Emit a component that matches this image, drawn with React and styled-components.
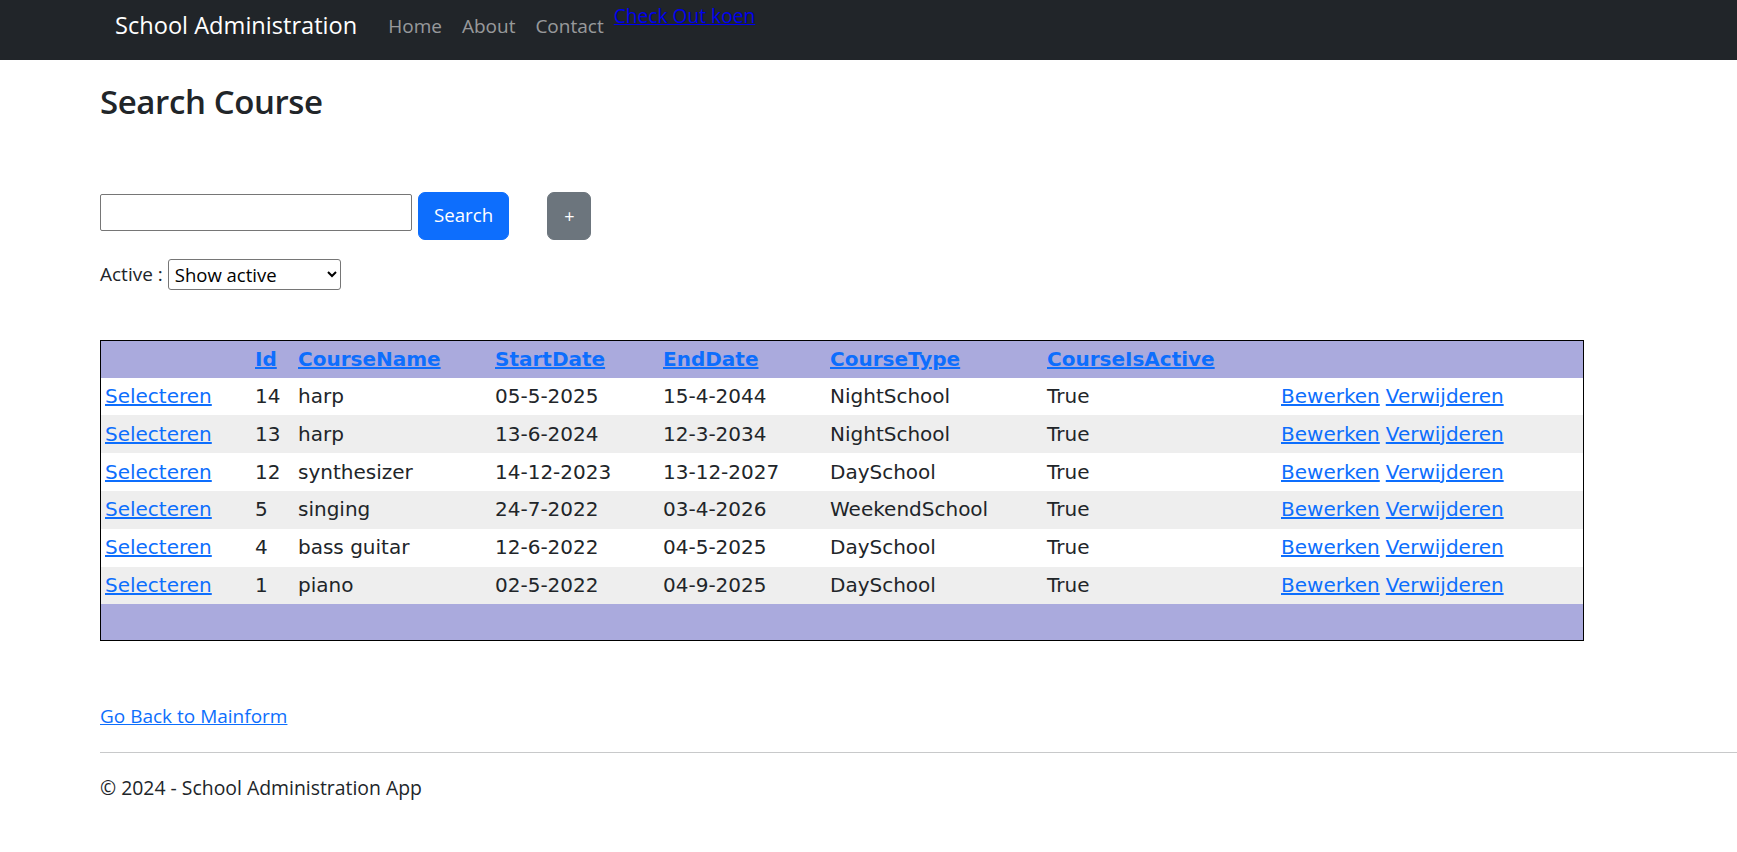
import React from "react";
import styled, { createGlobalStyle } from "styled-components";

const GlobalStyle = createGlobalStyle`
  html, body { margin: 0; padding: 0; background: #fff; }
  body {
    font-family: "Open Sans", "Liberation Sans", sans-serif;
    color: #212529;
    font-size: 19px;
  }
  * { box-sizing: border-box; }
`;

const Navbar = styled.nav`
  height: 60px;
  background: #212529;
  display: flex;
  align-items: flex-start;
  padding-left: 115px;
`;

const Brand = styled.a`
  color: #fff;
  font-size: 23.6px;
  line-height: normal;
  margin-top: 9px;
  margin-right: 21px;
  text-decoration: none;
  white-space: nowrap;
`;

const NavList = styled.ul`
  list-style: none;
  margin: 13px 0 0;
  padding: 0;
  display: flex;
`;

const NavLink = styled.a`
  display: block;
  padding: 0 10px;
  font-size: 19px;
  line-height: normal;
  color: rgba(255, 255, 255, 0.55);
  text-decoration: none;
`;

const RawLink = styled.a`
  margin-top: 2px;
  font-size: 19.2px;
  line-height: normal;
  color: #0000ee;
  text-decoration: underline;
  white-space: nowrap;
`;

const Main = styled.main`
  padding-left: 100px;
`;

const Heading = styled.h3`
  margin: 22px 0 0;
  font-size: 33px;
  font-weight: 600;
  letter-spacing: -0.4px;
  line-height: 39.6px;
  color: #212529;
`;

const SearchRow = styled.div`
  display: flex;
  align-items: flex-start;
  margin-top: 70px;
  height: 48px;
`;

const TextInput = styled.input`
  width: 312px;
  height: 37.5px;
  margin-top: 2px;
  border: 1px solid #767676;
  border-radius: 2px;
  font-size: 18px;
  font-family: "Open Sans", sans-serif;
  padding: 0 4px;
`;

const Button = styled.button`
  height: 48px;
  margin-left: ${(p) => p.$gap}px;
  padding: 0 ${(p) => p.$pad}px;
  border: 1px solid ${(p) => p.$bg};
  background: ${(p) => p.$bg};
  color: #fff;
  border-radius: 7px;
  font-family: "Open Sans", sans-serif;
  font-size: ${(p) => p.$fs}px;
  line-height: 1;
  cursor: pointer;
`;

const FilterRow = styled.div`
  display: flex;
  align-items: center;
  margin-top: 19px;
  height: 31px;
`;

const Label = styled.span`
  font-size: 19px;
  margin-right: 5px;
  white-space: pre;
`;

const Select = styled.select`
  width: 173px;
  height: 31px;
  border: 1px solid #767676;
  border-radius: 3px;
  background: #fff;
  font-family: "Open Sans", sans-serif;
  font-size: 18.5px;
  color: #000;
  padding: 0 2px;
`;

const Table = styled.table`
  margin-top: 50px;
  width: 1484px;
  border: 1px solid #000;
  border-spacing: 0;
  table-layout: fixed;
  font-family: "DejaVu Sans", Verdana, sans-serif;
  font-size: 20px;
`;

const HeadRow = styled.tr`
  background: #aaaadd;
`;

const Row = styled.tr`
  background: ${(p) => (p.$alt ? "#eeeeee" : "#ffffff")};
`;

const Th = styled.th`
  text-align: left;
  font-weight: bold;
  padding: 1px 4px 0;
  height: 37px;
  line-height: 23px;
`;

const Td = styled.td`
  padding: 0 4px;
  height: 37.8px;
  line-height: 23px;
  color: #212529;
  white-space: nowrap;
`;

const FootCell = styled.td`
  height: 35.5px;
  background: #aaaadd;
`;

const Link = styled.a`
  color: #0d6efd;
  text-decoration: underline;
`;

const ActionLink = styled(Link)`
  margin-right: 6px;
`;

const BackLink = styled.a`
  display: inline-block;
  margin-top: 61px;
  font-size: 19px;
  line-height: 28.5px;
  color: #0d6efd;
  text-decoration: underline;
`;

const Footer = styled.footer`
  margin-left: 100px;
  margin-top: 22px;
  border-top: 1px solid #c8c9ca;
  padding-top: 21px;
  font-size: 19.4px;
  line-height: 28.5px;
  color: #212529;
`;

const cols = [150, 43, 197, 168, 167, 217, 234, 306];
const headers = ["", "Id", "CourseName", "StartDate", "EndDate", "CourseType", "CourseIsActive", ""];

const rows = [
  [14, "harp", "05-5-2025", "15-4-2044", "NightSchool", "True"],
  [13, "harp", "13-6-2024", "12-3-2034", "NightSchool", "True"],
  [12, "synthesizer", "14-12-2023", "13-12-2027", "DaySchool", "True"],
  [5, "singing", "24-7-2022", "03-4-2026", "WeekendSchool", "True"],
  [4, "bass guitar", "12-6-2022", "04-5-2025", "DaySchool", "True"],
  [1, "piano", "02-5-2022", "04-9-2025", "DaySchool", "True"],
];

export default function App() {
  return (
    <>
      <GlobalStyle />
      <Navbar>
        <Brand href="#">School Administration</Brand>
        <NavList>
          <li><NavLink href="#">Home</NavLink></li>
          <li><NavLink href="#">About</NavLink></li>
          <li><NavLink href="#">Contact</NavLink></li>
        </NavList>
        <RawLink href="#">Check Out koen</RawLink>
      </Navbar>
      <Main>
        <Heading>Search Course</Heading>
        <SearchRow>
          <TextInput type="text" />
          <Button $bg="#0d6efd" $gap={6} $pad={15} $fs={18.7}>Search</Button>
          <Button $bg="#6c757d" $gap={38} $pad={16} $fs={18}>+</Button>
        </SearchRow>
        <FilterRow>
          <Label>Active :</Label>
          <Select defaultValue="active">
            <option value="active">Show active</option>
            <option value="inactive">Show inactive</option>
            <option value="all">Show all</option>
          </Select>
        </FilterRow>
        <Table>
          <colgroup>
            {cols.map((w, i) => (
              <col key={i} style={{ width: w }} />
            ))}
          </colgroup>
          <thead>
            <HeadRow>
              {headers.map((h, i) => (
                <Th key={i}>{h && <Link href="#">{h}</Link>}</Th>
              ))}
            </HeadRow>
          </thead>
          <tbody>
            {rows.map((r, i) => (
              <Row key={i} $alt={i % 2 === 1}>
                <Td><Link href="#">Selecteren</Link></Td>
                {r.map((c, j) => (
                  <Td key={j}>{c}</Td>
                ))}
                <Td>
                  <ActionLink href="#">Bewerken</ActionLink>
                  <Link href="#">Verwijderen</Link>
                </Td>
              </Row>
            ))}
          </tbody>
          <tfoot>
            <tr>
              <FootCell colSpan={8} />
            </tr>
          </tfoot>
        </Table>
        <BackLink href="#">Go Back to Mainform</BackLink>
      </Main>
      <Footer>© 2024 - School Administration App</Footer>
    </>
  );
}
